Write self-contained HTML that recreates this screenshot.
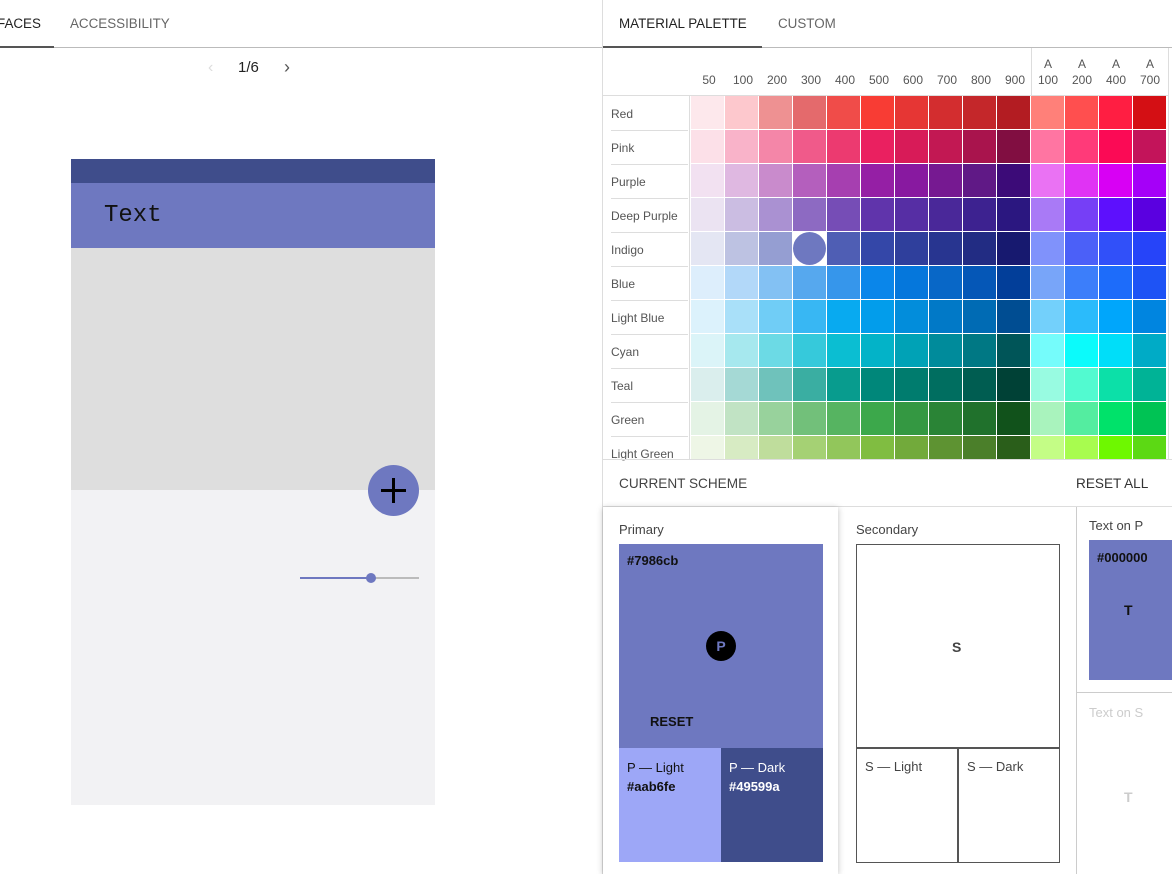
<!DOCTYPE html>
<html><head><meta charset="utf-8"><style>
*{box-sizing:border-box;margin:0;padding:0}
body{width:1172px;height:874px;overflow:hidden;background:#fff;font-family:"Liberation Sans",Arial,sans-serif;position:relative;color:#222}
.a{position:absolute}
.tab{font-size:13.4px;top:16px;color:#666}
.g{position:absolute;left:691px;top:96px;width:481px;height:363px;overflow:hidden}
.r{display:flex;height:34px}
.r i{display:block;width:33px;height:33px;margin-right:1px;flex:none}
.lab{position:absolute;left:611px;font-size:12px;color:#555;width:77px;height:34px;line-height:34px;border-bottom:1px solid #ddd}
.hd{position:absolute;top:73px;font-size:12px;color:#555;width:34px;text-align:center}
</style></head><body>
<div class="a tab" style="left:-3px;color:#222">FACES</div>
<div class="a tab" style="left:70px">ACCESSIBILITY</div>
<div class="a" style="left:0;top:47px;width:602px;height:1px;background:#bbb"></div>
<div class="a" style="left:0;top:46px;width:54px;height:2px;background:#555"></div>
<div class="a" style="left:208px;top:59px;font-size:16px;color:#ddd">&#8249;</div>
<div class="a" style="left:238px;top:59px;font-size:15px;color:#222">1/6</div>
<div class="a" style="left:284px;top:57px;font-size:18px;color:#555">&#8250;</div>
<div class="a" style="left:71px;top:159px;width:364px;height:24px;background:#3f4d8b"></div>
<div class="a" style="left:71px;top:183px;width:364px;height:65px;background:#6e78c0"></div>
<div class="a" style="left:104px;top:202px;font-family:'Liberation Mono',monospace;font-size:24px;color:#111">Text</div>
<div class="a" style="left:71px;top:248px;width:364px;height:242px;background:#dedede"></div>
<div class="a" style="left:71px;top:490px;width:364px;height:315px;background:#f2f2f4"></div>
<div class="a" style="left:368px;top:465px;width:51px;height:51px;border-radius:50%;background:#6e78c0"></div>
<div class="a" style="left:381px;top:489px;width:25px;height:3px;background:#000"></div>
<div class="a" style="left:392px;top:478px;width:3px;height:25px;background:#000"></div>
<div class="a" style="left:300px;top:577px;width:72px;height:2px;background:#6e78c0"></div>
<div class="a" style="left:372px;top:577px;width:47px;height:2px;background:#bbb"></div>
<div class="a" style="left:366px;top:573px;width:10px;height:10px;border-radius:50%;background:#6e78c0"></div>
<div class="a" style="left:602px;top:0;width:1px;height:874px;background:#ddd"></div>
<div class="a tab" style="left:619px;color:#222">MATERIAL PALETTE</div>
<div class="a tab" style="left:778px">CUSTOM</div>
<div class="a" style="left:603px;top:47px;width:569px;height:1px;background:#bbb"></div>
<div class="a" style="left:603px;top:46px;width:159px;height:2px;background:#555"></div>
<div class="a" style="left:1031px;top:48px;width:1px;height:48px;background:#ddd"></div>
<div class="a" style="left:1168px;top:48px;width:1px;height:412px;background:#ddd"></div>
<div class="a" style="left:603px;top:95px;width:566px;height:1px;background:#ddd"></div>
<div class="a" style="left:689px;top:96px;width:1px;height:363px;background:#ddd"></div>
<div class="hd" style="left:692px">50</div><div class="hd" style="left:726px">100</div><div class="hd" style="left:760px">200</div><div class="hd" style="left:794px">300</div><div class="hd" style="left:828px">400</div><div class="hd" style="left:862px">500</div><div class="hd" style="left:896px">600</div><div class="hd" style="left:930px">700</div><div class="hd" style="left:964px">800</div><div class="hd" style="left:998px">900</div>
<div class="hd" style="left:1031px;top:56px;line-height:16px">A<br>100</div><div class="hd" style="left:1065px;top:56px;line-height:16px">A<br>200</div><div class="hd" style="left:1099px;top:56px;line-height:16px">A<br>400</div><div class="hd" style="left:1133px;top:56px;line-height:16px">A<br>700</div>
<div class="lab" style="top:97px">Red</div><div class="lab" style="top:131px">Pink</div><div class="lab" style="top:165px">Purple</div><div class="lab" style="top:199px">Deep Purple</div><div class="lab" style="top:233px">Indigo</div><div class="lab" style="top:267px">Blue</div><div class="lab" style="top:301px">Light Blue</div><div class="lab" style="top:335px">Cyan</div><div class="lab" style="top:369px">Teal</div><div class="lab" style="top:403px">Green</div><div class="lab" style="top:437px;border:none">Light Green</div>
<div class="g">
<div class="r"><i style="background:#fde8ec"></i><i style="background:#fdc8cd"></i><i style="background:#ee9192"></i><i style="background:#e46a6c"></i><i style="background:#f04c49"></i><i style="background:#f83c34"></i><i style="background:#e63634"></i><i style="background:#d32d2f"></i><i style="background:#c4272a"></i><i style="background:#b31c22"></i><i style="background:#ff8079"></i><i style="background:#ff4f4f"></i><i style="background:#ff1e42"></i><i style="background:#d40f14"></i></div>
<div class="r"><i style="background:#fce0e8"></i><i style="background:#f9b3c9"></i><i style="background:#f486a8"></i><i style="background:#f05a8a"></i><i style="background:#ec3a70"></i><i style="background:#ea2060"></i><i style="background:#d81b58"></i><i style="background:#c21853"></i><i style="background:#a9144d"></i><i style="background:#810e41"></i><i style="background:#ff75a2"></i><i style="background:#ff3a79"></i><i style="background:#fb0a55"></i><i style="background:#c3145a"></i></div>
<div class="r"><i style="background:#f2e1f1"></i><i style="background:#dfb8e1"></i><i style="background:#c98bcc"></i><i style="background:#b45fbd"></i><i style="background:#a63fb0"></i><i style="background:#951fa5"></i><i style="background:#8819a0"></i><i style="background:#761991"></i><i style="background:#601986"></i><i style="background:#3c0b78"></i><i style="background:#ea72f3"></i><i style="background:#e033f4"></i><i style="background:#d800f4"></i><i style="background:#a500f8"></i></div>
<div class="r"><i style="background:#ebe3f2"></i><i style="background:#cbbde2"></i><i style="background:#aa91d2"></i><i style="background:#8d6ac2"></i><i style="background:#764db6"></i><i style="background:#6034ab"></i><i style="background:#562ea4"></i><i style="background:#4a2899"></i><i style="background:#3d2290"></i><i style="background:#2b1780"></i><i style="background:#a97af6"></i><i style="background:#763ff6"></i><i style="background:#5d10fd"></i><i style="background:#5a00e0"></i></div>
<div class="r"><i style="background:#e4e6f3"></i><i style="background:#bdc2e2"></i><i style="background:#959ed2"></i><i style="background:#fff;position:relative"><b style="position:absolute;left:0;top:0;width:33px;height:33px;border-radius:50%;background:#6e78c0"></b></i><i style="background:#4f5eb4"></i><i style="background:#3447a8"></i><i style="background:#2f3f9c"></i><i style="background:#283590"></i><i style="background:#222c83"></i><i style="background:#17196f"></i><i style="background:#8092fb"></i><i style="background:#4b60f8"></i><i style="background:#3150f9"></i><i style="background:#2644f9"></i></div>
<div class="r"><i style="background:#ddeefc"></i><i style="background:#b2d8f9"></i><i style="background:#83c1f3"></i><i style="background:#56a8ee"></i><i style="background:#3696eb"></i><i style="background:#0a86ea"></i><i style="background:#0577dc"></i><i style="background:#0867c7"></i><i style="background:#0557b7"></i><i style="background:#023e99"></i><i style="background:#78a5f9"></i><i style="background:#3c7efa"></i><i style="background:#1d6cfa"></i><i style="background:#1e53f5"></i></div>
<div class="r"><i style="background:#dcf2fc"></i><i style="background:#a9e0f9"></i><i style="background:#70cdf6"></i><i style="background:#38b7f3"></i><i style="background:#08aaf0"></i><i style="background:#029deb"></i><i style="background:#028ddb"></i><i style="background:#0179c7"></i><i style="background:#006bb4"></i><i style="background:#004d92"></i><i style="background:#73d0fb"></i><i style="background:#2bbbfb"></i><i style="background:#00a6fb"></i><i style="background:#0085e0"></i></div>
<div class="r"><i style="background:#dbf4f8"></i><i style="background:#a6e8ee"></i><i style="background:#6cdae5"></i><i style="background:#36c9db"></i><i style="background:#0bbed2"></i><i style="background:#03b3c8"></i><i style="background:#00a2b6"></i><i style="background:#008b9b"></i><i style="background:#007884"></i><i style="background:#005558"></i><i style="background:#75fcfb"></i><i style="background:#0bfbfb"></i><i style="background:#00def9"></i><i style="background:#00abc6"></i></div>
<div class="r"><i style="background:#daeeed"></i><i style="background:#a5d9d5"></i><i style="background:#6fc2bb"></i><i style="background:#3aaea2"></i><i style="background:#089c8e"></i><i style="background:#00877a"></i><i style="background:#007c6e"></i><i style="background:#006e60"></i><i style="background:#005d51"></i><i style="background:#004136"></i><i style="background:#98fbe1"></i><i style="background:#52fad0"></i><i style="background:#0ce0a8"></i><i style="background:#00b396"></i></div>
<div class="r"><i style="background:#e4f3e5"></i><i style="background:#c1e3c4"></i><i style="background:#98d29c"></i><i style="background:#72c07a"></i><i style="background:#56b461"></i><i style="background:#3ca84b"></i><i style="background:#349842"></i><i style="background:#2a8436"></i><i style="background:#20712c"></i><i style="background:#11521b"></i><i style="background:#a9f3bd"></i><i style="background:#54eda0"></i><i style="background:#00e26a"></i><i style="background:#00c354"></i></div>
<div class="r"><i style="background:#eef6e6"></i><i style="background:#d7ebc3"></i><i style="background:#bfdd9c"></i><i style="background:#a5d174"></i><i style="background:#92c65b"></i><i style="background:#80bd41"></i><i style="background:#72aa3b"></i><i style="background:#5e9332"></i><i style="background:#4b7f2a"></i><i style="background:#2a5e1a"></i><i style="background:#c4fd86"></i><i style="background:#a8fc4f"></i><i style="background:#6ef800"></i><i style="background:#5cd914"></i></div>
</div>
<div class="a" style="left:603px;top:459px;width:569px;height:1px;background:#ddd"></div>
<div class="a" style="left:619px;top:476px;font-size:13.6px;color:#444">CURRENT SCHEME</div>
<div class="a" style="left:1076px;top:476px;font-size:13.6px;color:#333">RESET ALL</div>
<div class="a" style="left:603px;top:506px;width:569px;height:1px;background:#ddd"></div>
<div class="a" style="left:603px;top:507px;width:235px;height:367px;background:#fff;box-shadow:0 1px 6px rgba(0,0,0,.25)"></div>
<div class="a" style="left:619px;top:522px;font-size:13px;color:#444">Primary</div>
<div class="a" style="left:619px;top:544px;width:204px;height:204px;background:#6e78c0"></div>
<div class="a" style="left:627px;top:553px;font-size:13px;font-weight:bold;color:#111">#7986cb</div>
<div class="a" style="left:706px;top:631px;width:30px;height:30px;border-radius:50%;background:#000;color:#6e78c0;font-weight:bold;font-size:14px;text-align:center;line-height:30px">P</div>
<div class="a" style="left:650px;top:714px;font-size:13px;font-weight:bold;color:#111">RESET</div>
<div class="a" style="left:619px;top:748px;width:102px;height:114px;background:#9da7f7"></div>
<div class="a" style="left:721px;top:748px;width:102px;height:114px;background:#3f4d8b"></div>
<div class="a" style="left:627px;top:758px;font-size:13px;line-height:19px;color:#111">P — Light<br><b>#aab6fe</b></div>
<div class="a" style="left:729px;top:758px;font-size:13px;line-height:19px;color:#fff">P — Dark<br><b>#49599a</b></div>
<div class="a" style="left:856px;top:522px;font-size:13px;color:#444">Secondary</div>
<div class="a" style="left:856px;top:544px;width:204px;height:205px;border:1px solid #555"></div>
<div class="a" style="left:952px;top:639px;font-size:14px;font-weight:bold;color:#444">S</div>
<div class="a" style="left:856px;top:747px;width:103px;height:116px;border:1px solid #555"></div>
<div class="a" style="left:957px;top:747px;width:103px;height:116px;border:1px solid #555"></div>
<div class="a" style="left:865px;top:759px;font-size:13px;color:#444">S — Light</div>
<div class="a" style="left:967px;top:759px;font-size:13px;color:#444">S — Dark</div>
<div class="a" style="left:1076px;top:507px;width:1px;height:367px;background:#ccc"></div>
<div class="a" style="left:1077px;top:692px;width:95px;height:1px;background:#ccc"></div>
<div class="a" style="left:1089px;top:518px;font-size:13px;color:#444">Text on P</div>
<div class="a" style="left:1089px;top:540px;width:83px;height:140px;background:#6e78c0"></div>
<div class="a" style="left:1097px;top:550px;font-size:13px;font-weight:bold;color:#111">#000000</div>
<div class="a" style="left:1124px;top:602px;font-size:14px;font-weight:bold;color:#111">T</div>
<div class="a" style="left:1089px;top:705px;font-size:13px;color:#ccc">Text on S</div>
<div class="a" style="left:1124px;top:789px;font-size:14px;font-weight:bold;color:#ccc">T</div>
</body></html>
